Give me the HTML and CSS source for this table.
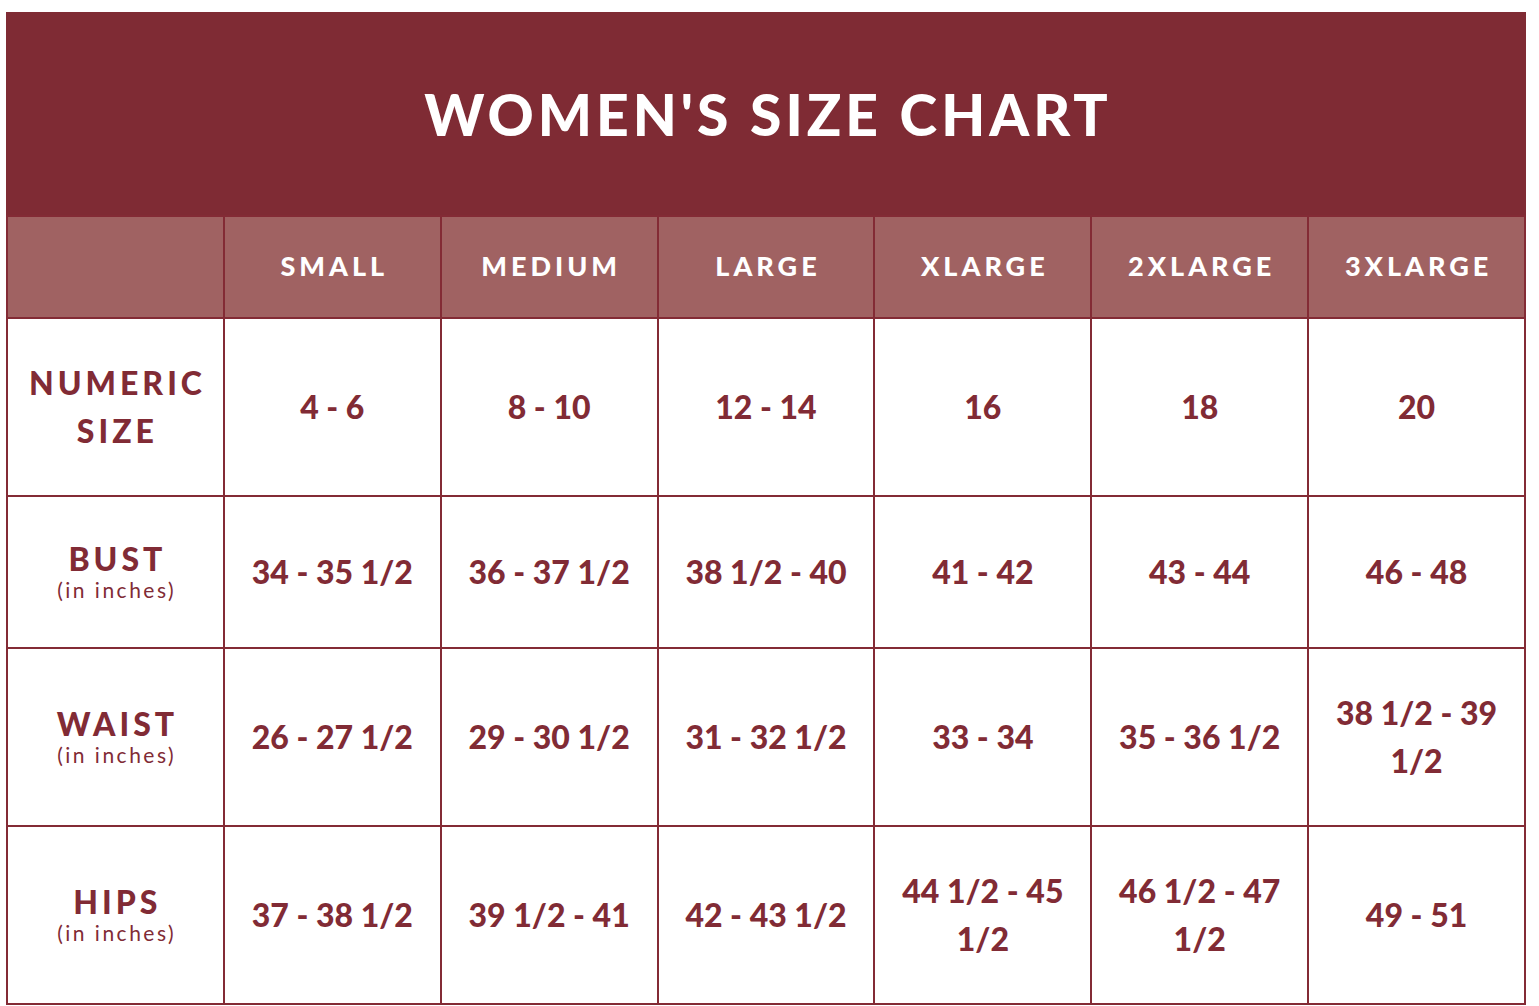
FILE: index.html
```html
<!DOCTYPE html>
<html lang="en">
<head>
<meta charset="utf-8">
<title>Women's Size Chart</title>
<link rel="stylesheet" href="styles.css">
</head>
<body>
<div class="chart">
  <div class="title">WOMEN'S SIZE CHART</div>

  <div class="head"></div>
  <div class="head">SMALL</div>
  <div class="head">MEDIUM</div>
  <div class="head">LARGE</div>
  <div class="head">XLARGE</div>
  <div class="head">2XLARGE</div>
  <div class="head">3XLARGE</div>

  <div class="label"><span class="name name-wrap">NUMERIC SIZE</span></div>
  <div class="cell">4 - 6</div>
  <div class="cell">8 - 10</div>
  <div class="cell">12 - 14</div>
  <div class="cell">16</div>
  <div class="cell">18</div>
  <div class="cell">20</div>

  <div class="label"><span class="name">BUST</span><span class="unit">(in inches)</span></div>
  <div class="cell">34 - 35 1/2</div>
  <div class="cell">36 - 37 1/2</div>
  <div class="cell">38 1/2 - 40</div>
  <div class="cell">41 - 42</div>
  <div class="cell">43 - 44</div>
  <div class="cell">46 - 48</div>

  <div class="label"><span class="name">WAIST</span><span class="unit">(in inches)</span></div>
  <div class="cell">26 - 27 1/2</div>
  <div class="cell">29 - 30 1/2</div>
  <div class="cell">31 - 32 1/2</div>
  <div class="cell">33 - 34</div>
  <div class="cell">35 - 36 1/2</div>
  <div class="cell">38 1/2 - 39 1/2</div>

  <div class="label"><span class="name">HIPS</span><span class="unit">(in inches)</span></div>
  <div class="cell">37 - 38 1/2</div>
  <div class="cell">39 1/2 - 41</div>
  <div class="cell">42 - 43 1/2</div>
  <div class="cell">44 1/2 - 45 1/2</div>
  <div class="cell">46 1/2 - 47 1/2</div>
  <div class="cell">49 - 51</div>
</div>
</body>
</html>
```
FILE: styles.css
```css
html, body {
  margin: 0;
  padding: 0;
  background: #ffffff;
}

body {
  padding: 12px 0 0 6px;
  font-family: Lato, "Open Sans", "Liberation Sans", sans-serif;
  color: #812b35;
}

.chart {
  width: 1520px;
  box-sizing: border-box;
  display: grid;
  grid-template-columns: repeat(7, 1fr);
  grid-template-rows: 201px 100px 176px 150px 176px 176px;
  gap: 2px;
  padding: 2px;
  background: #832b35;
}

.title {
  grid-column: 1 / -1;
  margin: -2px -2px 0;
  background: #7f2b34;
  color: #ffffff;
  display: flex;
  align-items: center;
  justify-content: center;
  font-size: 57px;
  font-weight: 900;
  letter-spacing: 4px;
  padding-left: 4px;
}

.head {
  background: #a06262;
  color: #ffffff;
  display: flex;
  align-items: center;
  justify-content: center;
  font-size: 27px;
  font-weight: 900;
  letter-spacing: 4px;
  padding-left: 4px;
  padding-bottom: 3px;
}

.label,
.cell {
  background: #ffffff;
  display: flex;
  flex-direction: column;
  align-items: center;
  justify-content: center;
  text-align: center;
}

.label {
  padding: 0 8px;
}

.name {
  font-size: 32px;
  font-weight: 900;
  letter-spacing: 4px;
  padding-left: 4px;
  line-height: 36px;
}

.name-wrap {
  line-height: 48px;
}

.unit {
  font-size: 21px;
  font-weight: 400;
  letter-spacing: 2.5px;
  padding-left: 2.5px;
  line-height: 26px;
}

.cell {
  font-size: 32px;
  font-weight: 900;
  line-height: 48px;
  padding: 0 16px;
}
```
